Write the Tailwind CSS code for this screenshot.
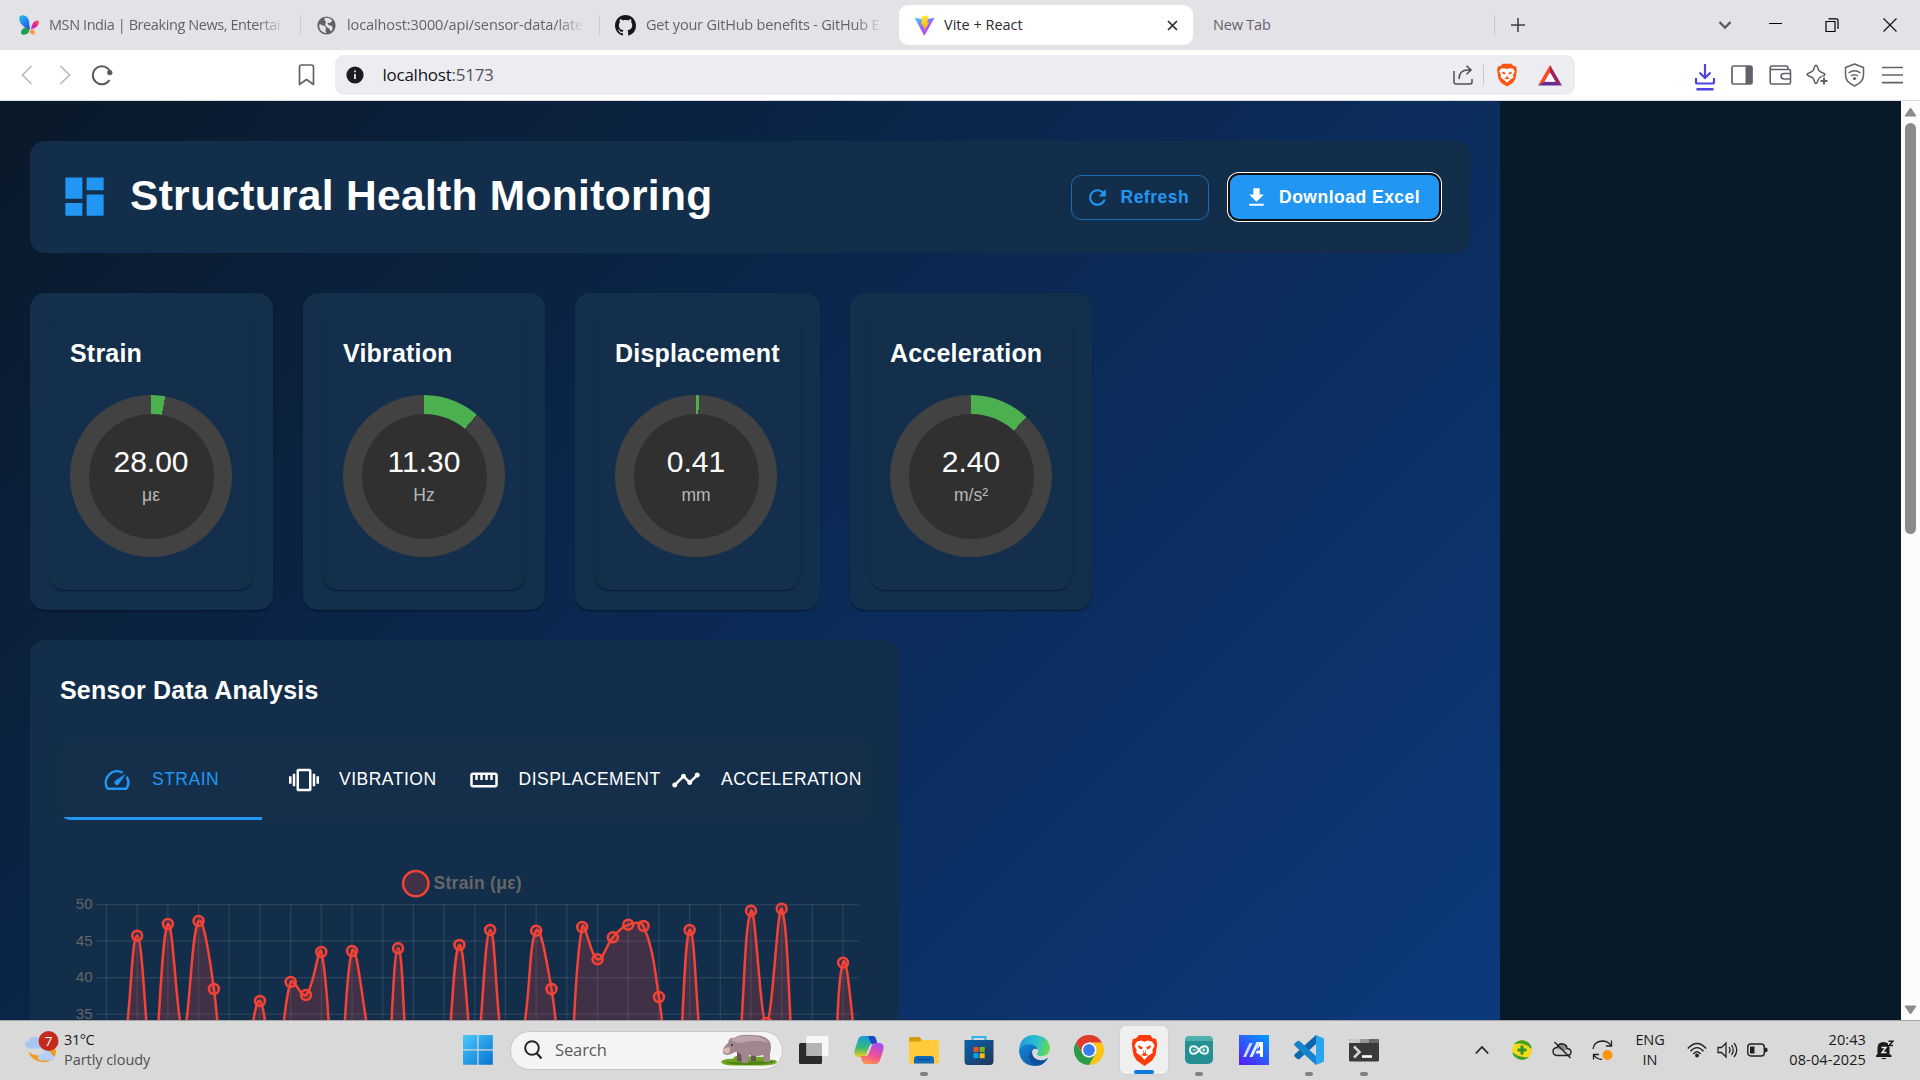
<!DOCTYPE html>
<html lang="en">
<head>
<meta charset="utf-8">
<title>Vite + React</title>
<script src="https://cdn.jsdelivr.net/npm/@tailwindcss/browser@4"></script>
</head>
<body class="w-[1920px] h-[1080px] overflow-hidden flex flex-col bg-[#081929] font-['Open_Sans',sans-serif]">

<!-- Tab strip -->
<div class="h-[50px] shrink-0 bg-[#e3e2e7] flex items-center text-[14.5px] text-[#63636a] whitespace-nowrap">
  <svg class="ml-[18px] w-[22px] h-[22px] shrink-0" viewBox="0 0 22 22"><defs><linearGradient id="m1" x1="0" y1="0" x2="0.6" y2="1"><stop offset="0" stop-color="#22c3ee"/><stop offset="1" stop-color="#2458e8"/></linearGradient><linearGradient id="m2" x1="0" y1="1" x2="1" y2="0"><stop offset="0" stop-color="#b22be0"/><stop offset=".5" stop-color="#e8208c"/><stop offset="1" stop-color="#ff6a3c"/></linearGradient></defs><path d="M2 2C5 0 10 2 11 7L12 16C9 15 4 12 2 8C1 5 1 3 2 2Z" fill="url(#m1)"/><path d="M21 7C18 5 14 8 13 15C17 15 21 12 21 7Z" fill="url(#m2)"/><path d="M11 15C7 12 3 15 3 19C4 22 9 21 11 18Z" fill="#1d9d55"/><path d="M12 16C15 14 17 17 17 19C16 22 13 21 12 18Z" fill="#ff9a4a"/></svg>
  <div class="ml-[9px] w-[236px] overflow-hidden tracking-[-0.42px] [mask-image:linear-gradient(to_right,black_88%,transparent)]">MSN India | Breaking News, Entertai</div>
  <div class="ml-[15px] w-px h-[20px] bg-[#cacacf]"></div>
  <svg class="ml-[16px] w-[19px] h-[19px] shrink-0" viewBox="0 0 20 20"><circle cx="10" cy="10" r="9.6" fill="#5f6368"/><path d="M3 8C5 11 8 9 9 12C10 14 8 15 10 18C4 18 1 12 3 8ZM8 2C12 1 15 3 16 5C14 6 15 8 12 7C10 7 12 10 14 10C16 10 17 12 16 15L14 16C14 12 10 13 9 10C8 7 11 6 8 5Z" fill="#e3e2e7"/></svg>
  <div class="ml-[11px] w-[238px] overflow-hidden tracking-[-0.1px] [mask-image:linear-gradient(to_right,black_88%,transparent)]">localhost:3000/api/sensor-data/lates</div>
  <div class="ml-[14px] w-px h-[20px] bg-[#cacacf]"></div>
  <svg class="ml-[15px] w-[21px] h-[21px] shrink-0" viewBox="0 0 16 16"><path fill="#17171a" d="M8 0C3.58 0 0 3.58 0 8c0 3.54 2.29 6.53 5.47 7.59.4.07.55-.17.55-.38 0-.19-.01-.82-.01-1.49-2.01.37-2.53-.49-2.69-.94-.09-.23-.48-.94-.82-1.13-.28-.15-.68-.52-.01-.53.63-.01 1.08.58 1.23.82.72 1.21 1.87.87 2.33.66.07-.52.28-.87.51-1.07-1.78-.2-3.64-.89-3.64-3.95 0-.87.31-1.59.82-2.15-.08-.2-.36-1.02.08-2.12 0 0 .67-.21 2.2.82.64-.18 1.32-.27 2-.27s1.36.09 2 .27c1.53-1.04 2.2-.82 2.2-.82.44 1.1.16 1.92.08 2.12.51.56.82 1.27.82 2.15 0 3.07-1.87 3.75-3.65 3.95.29.25.54.73.54 1.48 0 1.07-.01 1.93-.01 2.2 0 .21.15.46.55.38A8.01 8.01 0 0 0 16 8c0-4.42-3.58-8-8-8Z"/></svg>
  <div class="ml-[10px] w-[237px] overflow-hidden tracking-[-0.2px] [mask-image:linear-gradient(to_right,black_88%,transparent)]">Get your GitHub benefits - GitHub E</div>
  <div class="ml-[16px] w-[294px] h-[40px] rounded-[9px] bg-white flex items-center text-[#2b2b30]">
    <svg class="ml-[15px] w-[21px] h-[21px]" viewBox="0 0 21 21"><defs><linearGradient id="v1" x1="0" y1="0" x2=".6" y2="1"><stop offset="0" stop-color="#41d1ff"/><stop offset=".6" stop-color="#9a5cff"/><stop offset="1" stop-color="#bd34fe"/></linearGradient><linearGradient id="v2" x1="0" y1="0" x2="0" y2="1"><stop offset="0" stop-color="#ffea30"/><stop offset="1" stop-color="#ffa800"/></linearGradient></defs><path d="M.5 2.7L10.5 4.5L20.5 2.7L10.3 20.8Z" fill="url(#v1)"/><path d="M14.7.3L7.8 1.6L7.2 9.8L9.3 9.4L8.7 12.6L10.6 12L9.8 16.8L15.2 7.4L13 7.8Z" fill="url(#v2)"/></svg>
    <span class="ml-[9px]">Vite + React</span>
    <svg class="ml-auto mr-[15px] w-[11px] h-[11px]" viewBox="0 0 11 11"><path d="M1 1L10 10M10 1L1 10" stroke="#2b2b30" stroke-width="1.7"/></svg>
  </div>
  <span class="ml-[20px] w-[281px] tracking-[-0.2px]">New Tab</span>
  <div class="w-px h-[20px] bg-[#c4c4ca]"></div>
  <svg class="ml-[16px] w-[14px] h-[14px]" viewBox="0 0 14 14"><path d="M7 0V14M0 7H14" stroke="#3c3c42" stroke-width="1.5"/></svg>
  <svg class="ml-[193px] w-[14px] h-[10px]" viewBox="0 0 14 10"><path d="M1.5 2L7 7.7L12.5 2" stroke="#55555c" stroke-width="2.3" fill="none"/></svg>
  <div class="ml-[37px] mb-[3px] w-[13px] h-px bg-black"></div>
  <svg class="ml-[43px] w-[14px] h-[16px]" viewBox="0 0 14 16"><path d="M1 4.5H10V14.5H1ZM3.5 1.8H11.5Q13 1.8 13 3.5V12" stroke="#000" stroke-width="1.2" fill="none"/></svg>
  <svg class="ml-[44px] w-[14px] h-[14px]" viewBox="0 0 14 14"><path d="M.5 .5L13.5 13.5M13.5 .5L.5 13.5" stroke="#111" stroke-width="1.2"/></svg>
</div>

<!-- Toolbar -->
<div class="h-[51px] shrink-0 bg-white border-b border-[#dcdce2] flex items-center">
  <svg class="ml-[20px] w-[14px] h-[20px]" viewBox="0 0 14 20"><path d="M11.5 1L2.5 10L11.5 19" stroke="#b9b9be" stroke-width="1.7" fill="none"/></svg>
  <svg class="ml-[24px] w-[14px] h-[20px]" viewBox="0 0 14 20"><path d="M2.5 1L11.5 10L2.5 19" stroke="#b9b9be" stroke-width="1.7" fill="none"/></svg>
  <svg class="ml-[18px] w-[24px] h-[22px]" viewBox="0 0 24 22"><path d="M19.5 16A9 9 0 1 1 20.2 8" stroke="#55595f" stroke-width="1.9" fill="none"/><circle cx="19.8" cy="8.6" r="2.6" fill="#55595f"/></svg>
  <svg class="ml-[184px] w-[17px] h-[22px]" viewBox="0 0 17 22"><path d="M1.5 20.5V3Q1.5 1 3.5 1H13.5Q15.500 1 15.500 3V20.500L8.500 15.500Z" stroke="#5f6369" stroke-width="1.7" fill="none" stroke-linejoin="round"/></svg>
  <div class="ml-[20px] w-[1240px] h-[40px] rounded-[9px] bg-[#ededf1] flex items-center">
    <svg class="ml-[11px] w-[18px] h-[18px]" viewBox="0 0 18 18"><circle cx="9" cy="9" r="8.6" fill="#1b1b20"/><path d="M9 8V13M9 4.5V6.300" stroke="#e8e8ec" stroke-width="1.8"/></svg>
    <span class="ml-[18.5px] text-[17px] tracking-[-0.25px] text-[#15151a]">localhost<span class="text-[#52525a]">:5173</span></span>
    <svg class="ml-auto w-[20px] h-[20px]" viewBox="0 0 20 20"><path d="M1 6V17Q1 19 3 19H17Q19 19 19 17V14M6 14Q6 5 15 5H18M13.500 .8L18 5L13.500 9.300" stroke="#4c4f55" stroke-width="1.5" fill="none"/></svg>
    <div class="ml-[10px] w-px h-[20px] bg-[#c8c8ce]"></div>
    <svg class="ml-[12px] w-[22px] h-[24px]" viewBox="0 0 24 28"><path d="M7 1H17L19.500 3.500L22.500 4L23.500 8L22 18L19 23L12 27.500L5 23L2 18L.5 8L1.500 4L4.500 3.500Z" fill="#fb5412"/><path d="M5 6.500L9 6L12 7L15 6L19 6.500L21 9.500L19 14L19.500 17L15 20L12 23L9 20L4.500 17L5 14L3 9.500Z" fill="#fff"/><path d="M6 10L10.500 11.500L9.500 13.500L7 12.500ZM18 10L13.500 11.500L14.500 13.500L17 12.500ZM10.500 14L12 16.500L13.500 14L13 17L15.500 18L12 19L8.500 18L11 17Z" fill="#fb5412"/></svg>
    <svg class="ml-[20px] mr-[13px] w-[24px] h-[21px]" viewBox="0 0 24 21"><path d="M12 0L12 7.500L6.500 17L0 20.500Z" fill="#ff4724"/><path d="M12 0L24 20.500L17.500 17L12 7.500Z" fill="#9e1f63"/><path d="M0 20.500H24L17.500 16.500H6.500Z" fill="#662d91"/><path d="M12 7.500L17.500 16.700H6.500Z" fill="#fff"/></svg>
  </div>
  <svg class="ml-[119px] mt-[4px] w-[22px] h-[28px]" viewBox="0 0 22 28"><path d="M11 1V14M5.500 9.500L11 15L16.500 9.500M2 15V19Q2 20.500 3.500 20.500H18.500Q20 20.500 20 19V15" stroke="#4c44e4" stroke-width="2.200" fill="none"/><path d="M3.500 26.300H18.500" stroke="#4c44e4" stroke-width="2.400" stroke-linecap="round"/></svg>
  <svg class="ml-[15px] w-[22px] h-[20px]" viewBox="0 0 22 20"><rect x="1" y="1" width="20" height="18" rx="1.500" stroke="#5f6369" stroke-width="1.700" fill="none"/><path d="M14.500 1H21V19H14.500Z" fill="#5f6369"/></svg>
  <svg class="ml-[16px] w-[23px] h-[20px]" viewBox="0 0 23 20"><path d="M19 5V2.500Q19 1 17.500 1H3Q1.200 1 1.200 3Q1.200 4.500 3 4.500H20Q21.500 4.500 21.500 6V17.500Q21.500 19 20 19H2.700Q1.200 19 1.200 17.500V3M21.500 8.500H15.500Q12 8.500 12 11.300Q12 14 15.500 14H21.500" stroke="#5f6369" stroke-width="1.600" fill="none"/></svg>
  <svg class="ml-[14px] w-[23px] h-[22px]" viewBox="0 0 23 22"><path d="M10 1.200Q11 1.200 11.500 3C12.500 6.500 13 7.500 17 9Q19 9.700 19 10.500Q19 11.200 17 12C13 13.500 12.500 14.500 11.500 17.500Q11 19.500 10 19.500Q9 19.500 8.500 17.500C7.500 14 7 13.300 3 12Q1 11.200 1 10.500Q1 9.700 3 9C7 7.500 7.500 6.500 8.500 3Q9 1.200 10 1.200Z" stroke="#5f6369" stroke-width="1.500" fill="#fff"/><path d="M18 12.500V21.500M13.500 17H22.500" stroke="#fff" stroke-width="5"/><path d="M18 13.500V20.500M14.500 17H21.500" stroke="#5f6369" stroke-width="2"/></svg>
  <svg class="ml-[15px] w-[21px] h-[24px]" viewBox="0 0 21 24"><path d="M10.500 1L19.500 4.500V12Q19.500 19 10.500 23Q1.500 19 1.500 12V4.500Z" stroke="#5f6369" stroke-width="1.500" fill="none" stroke-linejoin="round"/><path d="M4.500 10Q10.500 5.500 16.500 10M7 13Q10.500 10.300 14 13" stroke="#5f6369" stroke-width="1.500" fill="none"/><circle cx="10.500" cy="15.500" r="1.600" fill="#5f6369"/></svg>
  <svg class="ml-[17px] w-[21px] h-[18px]" viewBox="0 0 21 18"><path d="M0 1.500H21M0 9H21M0 16.700H21" stroke="#5f6369" stroke-width="1.700"/></svg>
</div>

<!-- Page -->
<div class="h-[919px] shrink-0 flex overflow-hidden font-['Liberation_Sans',Arial,sans-serif]">
  <main class="w-[1500px] h-[1953px] px-[30px] pt-[40px] bg-[linear-gradient(135deg,#0a1929_0%,#0d47a1_100%)] text-white">

    <header class="h-[112px] rounded-[15px] bg-[#132e4b] pl-[29px] pr-[31px] flex items-center">
      <svg class="mb-px w-[51px] h-[51px]" viewBox="0 0 24 24"><path fill="#2196f3" d="M3 13h8V3H3v10zm0 8h8v-6H3v6zm10 0h8V11h-8v10zm0-18v6h8V3h-8z"/></svg>
      <h1 class="ml-[20px] mb-[2px] text-[42.5px] tracking-[0.00735em] font-bold">Structural Health Monitoring</h1>
      <button class="ml-auto w-[138px] h-[45px] rounded-[10px] border border-[#2196f3]/60 pl-[13px] flex items-center gap-[10.5px] text-[#2196f3] text-[17.5px] font-bold tracking-[0.02857em]">
        <svg class="w-[25px] h-[25px]" viewBox="0 0 24 24"><path fill="currentColor" d="M17.650 6.350C16.200 4.900 14.210 4 12 4c-4.420 0-7.990 3.580-7.990 8s3.570 8 7.990 8c3.730 0 6.840-2.550 7.730-6h-2.080c-.82 2.330-3.040 4-5.650 4-3.310 0-6-2.690-6-6s2.690-6 6-6c1.660 0 3.140.69 4.220 1.780L13 11h7V4l-2.350 2.350z"/></svg>Refresh
      </button>
      <button class="ml-[21px] w-[209px] h-[44px] rounded-[9px] bg-[#2196f3] shadow-[0_0_0_2px_#101010,0_0_0_3px_#ffffff] pl-[14px] flex items-center gap-[10px] text-[17.5px] font-bold tracking-[0.02857em] whitespace-nowrap">
        <svg class="w-[25px] h-[25px] shrink-0" viewBox="0 0 24 24"><path fill="currentColor" d="M19 9h-4V3H9v6H5l7 7 7-7zM5 18v2h14v-2H5z"/></svg>Download Excel
      </button>
    </header>

    <section class="mt-[40px] flex gap-[30px]" id="gauges"></section>

    <section class="mt-[30px] w-[869px] h-[700px] rounded-[15px] bg-[#132e4b] p-[30px]">
      <h2 class="h-[40px] leading-[40px] text-[25px] tracking-[0.0075em] font-bold">Sensor Data Analysis</h2>
      <div class="mt-[30px] w-[809px] h-[80px] rounded-[10px] bg-[#152f4a] overflow-hidden flex text-[17.5px] tracking-[0.02857em]">
        <div class="ml-[2px] w-[200px] border-b-[3px] border-[#2196f3] pl-[40px] pt-px flex items-center gap-[20px] text-[#2196f3]">
          <svg class="mt-[2px] w-[30px] h-[30px]" viewBox="0 0 24 24"><path fill="currentColor" d="m20.380 8.570-1.230 1.850a8 8 0 0 1-.22 7.580H5.070A8 8 0 0 1 15.580 6.850l1.850-1.230A10 10 0 0 0 3.350 19a2 2 0 0 0 1.720 1h13.850a2 2 0 0 0 1.740-1 10 10 0 0 0-.27-10.440zm-9.790 6.840a2 2 0 0 0 2.830 0l5.660-8.490-8.490 5.660a2 2 0 0 0 0 2.830z"/></svg>STRAIN
        </div>
        <div class="ml-[27px] w-[180px] flex items-center gap-[20px]">
          <svg class="w-[30px] h-[30px] shrink-0" viewBox="0 0 24 24"><path fill="currentColor" d="M0 15h2V9H0v6zm3 2h2V7H3v10zm19-8v6h2V9h-2zm-3 8h2V7h-2v10zM16.500 3h-9C6.670 3 6 3.670 6 4.500v15c0 .83.67 1.500 1.500 1.500h9c.83 0 1.500-.67 1.500-1.500v-15c0-.83-.67-1.500-1.500-1.500zM16 19H8V5h8v14z"/></svg><span class="mb-[2px]">VIBRATION</span>
        </div>
        <div class="w-[202px] flex items-center gap-[19.5px]">
          <svg class="w-[30px] h-[30px] shrink-0" viewBox="0 0 24 24"><path fill="currentColor" d="M21 6H3c-1.100 0-2 .9-2 2v8c0 1.100.9 2 2 2h18c1.100 0 2-.9 2-2V8c0-1.100-.9-2-2-2zm0 10H3V8h2v4h2V8h2v4h2V8h2v4h2V8h2v4h2V8h2v8z"/></svg><span class="mb-[2px]">DISPLACEMENT</span>
        </div>
        <div class="flex items-center gap-[20px]">
          <svg class="w-[30px] h-[30px] shrink-0" viewBox="0 0 24 24"><path fill="currentColor" d="M23 8c0 1.100-.9 2-2 2-.18 0-.35-.02-.51-.07l-3.560 3.550c.05.16.07.34.07.520 0 1.100-.9 2-2 2s-2-.9-2-2c0-.18.02-.36.07-.52l-2.550-2.550c-.16.05-.34.07-.52.07s-.36-.02-.52-.07l-4.550 4.560c.05.16.07.33.07.510 0 1.100-.9 2-2 2s-2-.9-2-2 .9-2 2-2c.18 0 .35.02.51.07l4.560-4.550C8.020 9.360 8 9.180 8 9c0-1.100.9-2 2-2s2 .9 2 2c0 .18-.02.36-.07.52l2.550 2.550c.16-.05.34-.07.52-.07s.36.02.52.07l3.550-3.560C19.020 8.350 19 8.180 19 8c0-1.100.9-2 2-2s2 .9 2 2z"/></svg><span class="mb-[2px]">ACCELERATION</span>
        </div>
      </div>
      <svg id="chart" class="w-[809px] h-[200px]" viewBox="60 820 809 200" font-family="Liberation Sans, Arial, sans-serif"></svg>
    </section>
  </main>
  <div class="ml-auto w-[19px] h-[919px] bg-[#fcfcfc] flex flex-col items-center">
    <svg class="mt-[6px] w-[13px] h-[10px]" viewBox="0 0 13 10"><path d="M6.500 1L12 9H1Z" fill="#8a8a8a" stroke="#8a8a8a" stroke-linejoin="round"/></svg>
    <div class="mt-[6px] w-[11px] h-[411px] rounded-full bg-[#8a8a8a]"></div>
    <svg class="mt-auto mb-[5px] w-[13px] h-[10px]" viewBox="0 0 13 10"><path d="M6.500 9L12 1H1Z" fill="#8a8a8a" stroke="#8a8a8a" stroke-linejoin="round"/></svg>
  </div>
</div>

<!-- Taskbar -->
<div class="h-[60px] shrink-0 bg-[#d9d9d9] border-t border-[#a8a8a8] pb-px flex items-center text-[#1a1a1a]">
  <div class="ml-[24px] w-[439px] flex items-center">
    <svg class="mb-[3px] w-[36px] h-[36px]" viewBox="0 0 36 36"><path d="M16 24.500Q27 25 27 13Q34 18 31 25Q27 32 18 31Q8 30 4 21Q10 25 16 24.500Z" fill="#f29a1f"/><path d="M5 17.500Q1 17 1 13.500Q1 10 5 10Q6 5 12 6Q18 7 18 17.500Z" fill="#a9c6f3"/><path d="M17 29.500Q13 29 14 25.500Q15 23 18 23Q20 18 25 20Q28 22 28 24Q31 25 30 28Q29 29.500 27 29.500Z" fill="#b5cef6"/><circle cx="24.500" cy="10" r="10" fill="#c42b1c"/><text x="24.500" y="15" text-anchor="middle" font-size="13.500" fill="#fff" font-family="Open Sans, sans-serif">7</text></svg>
    <div class="ml-[4px] mb-px text-[14.5px] leading-[20px] tracking-[-0.4px]"><div>31°C</div><div class="text-[#505050] tracking-[-0.05px]">Partly cloudy</div></div>
  </div>
  <svg class="w-[30px] h-[30px]" viewBox="0 0 30 30"><defs><linearGradient id="w1" x1="0" y1="0" x2="1" y2="1"><stop offset="0" stop-color="#4cc9fb"/><stop offset="1" stop-color="#0672d0"/></linearGradient></defs><path d="M0 0H14.300V14.300H0ZM15.500 0H29.800V14.300H15.500ZM0 15.500H14.300V29.800H0ZM15.500 15.500H29.800V29.800H15.500Z" fill="url(#w1)"/></svg>
  <div class="ml-[17px] w-[273px] h-[39px] rounded-full bg-[#f4f4f4] border border-[#c6c6c6] flex items-center">
    <svg class="ml-[12px] w-[20px] h-[20px]" viewBox="0 0 20 20"><circle cx="9" cy="8" r="6.800" stroke="#222" stroke-width="1.900" fill="none"/><path d="M13.500 13L18.500 18.500" stroke="#222" stroke-width="2.200"/></svg>
    <span class="ml-[12px] text-[16.5px] tracking-[-0.1px] text-[#5a5a5a]">Search</span>
    <svg class="ml-auto mr-[4px] w-[58px] h-[32px]" viewBox="0 0 58 32"><path d="M1 27Q8 24 12 25L16 22L45 23L49 26Q56 25 57 28Q56 31 44 31.500H12Q1 31 1 27Z" fill="#6fa51e"/><path d="M5 28L54 27Q50 31 30 31Q10 31 5 28Z" fill="#4f8510"/><path d="M31 17H36V27H31ZM17 16H22V27H17Z" fill="#6e555d"/><path d="M3 18Q2 14 8 9Q9 3 14 4Q20 0 32 1Q46 1 50 8Q52 14 50 19L50 28H44L43 21Q36 23 29 21L28 29H22L21 20Q17 18 15 18Q12 20 8 21Q3 21 3 18Z" fill="#a2868e"/><path d="M10 6Q20 1 32 2Q45 3 48 9Q38 5 26 8Q17 10 13 7Z" fill="#bda5a9"/><path d="M3 16Q5 21 9 19Q11 16 9 13L5 14Z" fill="#dcb9ae"/><circle cx="12" cy="11" r=".9" fill="#2b1b1b"/></svg>
  </div>
  <div class="ml-[3.500px] flex items-center">
    <div class="w-[55px] h-[59px] flex items-center justify-center"><svg class="w-[30px] h-[30px]" viewBox="0 0 30 30"><rect x="0" y="8" width="23" height="21" rx="1.500" fill="#2b2b2b"/><rect x="7.500" y="1" width="22" height="20" rx="1.500" fill="#fafafa" fill-opacity=".95"/><path d="M7.500 8H23V21H7.500Z" fill="#b4b4b4"/></svg></div>
    <div class="w-[55px] h-[59px] flex items-center justify-center"><svg class="w-[30px] h-[30px]" viewBox="0 0 30 30"><defs><linearGradient id="c1" x1="0" y1="0" x2="0" y2="1"><stop offset="0" stop-color="#159de0"/><stop offset=".55" stop-color="#35b77c"/><stop offset="1" stop-color="#f1cf18"/></linearGradient><linearGradient id="c2" x1=".7" y1="0" x2=".3" y2="1"><stop offset="0" stop-color="#a54df2"/><stop offset=".55" stop-color="#ee5098"/><stop offset="1" stop-color="#ff9248"/></linearGradient></defs><path d="M9 1H19Q21 1 22 4L23 9H18Q16 9 15 12L12 20Q11 22 8 22H4Q-1 21 1 14L4 5Q5 1 9 1Z" fill="url(#c1)"/><path d="M14 1H18.500Q21 1 22 4L23.500 9H18L16 6Z" fill="#1a45c4"/><path d="M21 29H11Q9 29 8 26L6.500 21H12Q14 21 15 18L18 10Q19 8 22 8H26Q31 9 29 16L26 25Q25 29 21 29Z" fill="url(#c2)"/></svg></div>
    <div class="relative w-[55px] h-[59px] flex items-center justify-center"><svg class="w-[30px] h-[28px]" viewBox="0 0 30 28"><path d="M0 3Q0 1 2 1H10L13 4H13V8H0Z" fill="#d99a07"/><path d="M0 5.500H11L13 4H28.500Q30 4 30 5.500V26Q30 27.500 28.500 27.500H1.500Q0 27.500 0 26Z" fill="#ffcb3d"/><path d="M5 27.500V23Q5 20 8 20H22Q25 20 25 23V27.500Z" fill="#0f6cbd"/><path d="M9 23.500H21" stroke="#0a4d91" stroke-width="1.500"/></svg><i class="absolute bottom-[4px] w-[8px] h-[4px] rounded-full bg-[#818181]"></i></div>
    <div class="w-[55px] h-[59px] flex items-center justify-center"><svg class="w-[30px] h-[30px]" viewBox="0 0 30 30"><defs><linearGradient id="s1" x1="0" y1="0" x2="1" y2="1"><stop offset="0" stop-color="#0a63ad"/><stop offset="1" stop-color="#213459"/></linearGradient></defs><path d="M8.500 6V2H21.500V6" stroke="#2fb4f0" stroke-width="2" fill="none"/><path d="M.5 5H29.500V26Q29.500 30 26 30H4Q.5 30 .5 26Z" fill="url(#s1)"/><path d="M9.500 12H14.500V17H9.500Z" fill="#f25022"/><path d="M15.700 12H20.700V17H15.700Z" fill="#7fba00"/><path d="M9.500 18.200H14.500V23.200H9.500Z" fill="#00a4ef"/><path d="M15.700 18.200H20.700V23.200H15.700Z" fill="#ffb900"/></svg></div>
    <div class="w-[55px] h-[59px] flex items-center justify-center"><svg class="w-[31px] h-[31px]" viewBox="0 0 30 30"><defs><linearGradient id="e1" x1="0" y1=".3" x2="1" y2=".5"><stop offset="0" stop-color="#1c9de0"/><stop offset=".55" stop-color="#2cbfd0"/><stop offset="1" stop-color="#66dc50"/></linearGradient><linearGradient id="e2" x1="0" y1="0" x2="1" y2="1"><stop offset="0" stop-color="#1488d8"/><stop offset="1" stop-color="#0c4a94"/></linearGradient></defs><path d="M0 15Q1 0 15 0Q29 1 30 13Q29 20 22 20.500Q17 20.500 17.500 18Q20 15 17 12Q10 6 0 15Z" fill="url(#e1)"/><path d="M0 15Q3 8 11 9Q17 10 18 14Q14 12 12.500 16Q12 24 21 25Q25 25 28 22Q24 30 15 30Q1 29 0 15Z" fill="url(#e2)"/><path d="M12.500 16Q8 20 11 25Q14 29 19 29.500Q25 28 28 22Q25 25 20 24.500Q12.500 23 12.500 16Z" fill="#0d4f9f"/></svg></div>
    <div class="w-[55px] h-[59px] flex items-center justify-center"><svg class="w-[30px] h-[30px]" viewBox="0 0 30 30"><path d="M28 7.500A15 15 0 0 1 15 30L21.500 18.700L15 7.500Z" fill="#fcc419"/><path d="M2 7.500L8.500 18.700L15 7.500H28A15 15 0 0 0 2 7.500Z" fill="#df3a2c"/><path d="M2 7.500A15 15 0 0 0 15 30L21.500 18.700L15 22L8.500 18.700Z" fill="#2a9b48"/><circle cx="15" cy="15" r="7.500" fill="#fff"/><circle cx="15" cy="15" r="5.900" fill="#3b7ded"/></svg></div>
    <div class="w-[55px] h-[59px] flex items-center justify-center"><div class="relative w-[48px] h-[48px] rounded-[5px] bg-[#efefef] shadow-[0_0_1px_#999] flex items-center justify-center"><svg class="w-[27px] h-[31px]" viewBox="0 0 24 28"><path d="M7 0H17L19.500 3L22.500 3.500L23.500 8L22 18L19 23L12 28L5 23L2 18L.5 8L1.500 3.500L4.500 3Z" fill="#fb3b0c"/><path d="M5 6L9 5L12 6L15 5L19 6L21 9.500L19 14L19.500 16L15 19L12 22.500L9 19L4.500 16L5 14L3 9.500Z" fill="#fff"/><path d="M6 9L10.500 11L9.500 13L7 12ZM18 9L13.500 11L14.500 13L17 12ZM10.500 13L12 16.500L13.500 13L13 17L15.500 18L12 19L8.500 18L11 17Z" fill="#fb3b0c"/></svg><i class="absolute bottom-0 w-[20px] h-[4px] rounded-full bg-[#0d7ad8]"></i></div></div>
    <div class="relative w-[55px] h-[59px] flex items-center justify-center"><svg class="w-[28px] h-[28px]" viewBox="0 0 28 28"><rect width="28" height="28" rx="5" fill="#239094"/><path d="M0 5Q0 0 5 0H23Q28 0 28 5Z" fill="#4eb0aa"/><path d="M14 14C11 9 5 9 5 14S11 19 14 14S23 9 23 14S17 19 14 14Z" stroke="#e7f5f4" stroke-width="2" fill="none"/><path d="M7.500 14H11M17 14H20.500M18.750 12.300V15.700" stroke="#e7f5f4"/></svg><i class="absolute bottom-[4px] w-[8px] h-[4px] rounded-full bg-[#818181]"></i></div>
    <div class="w-[55px] h-[59px] flex items-center justify-center"><svg class="w-[30px] h-[30px]" viewBox="0 0 30 30"><defs><linearGradient id="a1" x1=".9" y1="0" x2=".1" y2="1"><stop offset="0" stop-color="#0498ff"/><stop offset="1" stop-color="#571ef8"/></linearGradient></defs><path d="M0 0H30V30H0Z" fill="url(#a1)"/><path d="M4 22L10.500 8H13.500L7 22Z" fill="#cfdcff"/><path d="M10.500 22L17.500 7H20.500L13.500 22Z" fill="#eaf1ff"/><path d="M20.500 7H24V22H21V18.500H16.500L18 15.500H21V11L17.500 15Z" fill="#fff"/></svg></div>
    <div class="relative w-[55px] h-[59px] flex items-center justify-center"><svg class="w-[30px] h-[30px]" viewBox="0 0 30 30"><path d="M22 0L30 3.500V26.500L22 30Z" fill="#2aa5ef"/><path d="M22 0L1 19Q-.5 20.500 1 22L3.500 24Q4.500 24.500 5.500 24L22 9Z" fill="#0b67ad"/><path d="M22 30L1 11Q-.5 9.500 1 8L3.500 6Q4.500 5.500 5.500 6L22 21Z" fill="#1583cd"/></svg><i class="absolute bottom-[4px] w-[8px] h-[4px] rounded-full bg-[#818181]"></i></div>
    <div class="relative w-[55px] h-[59px] flex items-center justify-center"><svg class="w-[30px] h-[24px]" viewBox="0 0 30 24"><rect y="1" width="30" height="22.500" rx="1.500" fill="#3a3a3a"/><path d="M0 5V2.500Q0 1 1.500 1H11V5Z" fill="#c9c9c9"/><path d="M11 1H20V5H11Z" fill="#979797"/><path d="M20 1H28.500Q30 1 30 2.500V5H20Z" fill="#666"/><path d="M5 8.500L10.500 14L5 19.500" stroke="#d2d2d2" stroke-width="2.600" fill="none"/><path d="M13 18.500H23" stroke="#fff" stroke-width="2.600"/></svg><i class="absolute bottom-[4px] w-[8px] h-[4px] rounded-full bg-[#818181]"></i></div>
  </div>
  <div class="ml-auto mr-[26px] flex items-center">
    <svg class="w-[14px] h-[10px]" viewBox="0 0 14 10"><path d="M.8 8.500L7 2L13.200 8.500" stroke="#222" stroke-width="1.800" fill="none"/></svg>
    <svg class="ml-[23px] w-[20px] h-[20px]" viewBox="0 0 20 20"><circle cx="10" cy="10" r="10" fill="#f6d81c"/><path d="M2 4Q9 -3 17 3Q20 6 19.500 9Q13 2 2 4ZM.5 12Q6 18 17 17Q10 23 3 17Q.5 15 .5 12Z" fill="#3f9f2a"/><path d="M10 5.500V14.500M5.500 10H14.500" stroke="#2f9427" stroke-width="3"/></svg>
    <svg class="ml-[20px] w-[20px] h-[18px]" viewBox="0 0 20 18"><path d="M5 14.500Q1 14 1 10.500Q1 7 5 6.500Q7 2 11 3Q15 4 15 7.500Q19 8 19 11Q19 14.500 15 14.500Z" fill="#cfcfcf"/><path d="M4 7Q7 2 11 3Q15 4 15 8L12 10Z" fill="#8c8c8c"/><path d="M5 14.500Q1 14 1 10.500Q1 7 5 6.500Q7 2 11 3Q15 4 15 7.500Q19 8 19 11Q19 14.500 15 14.500Z" fill="none" stroke="#222" stroke-width="1.400"/><path d="M2.500 1L18.500 17" stroke="#222" stroke-width="1.500"/></svg>
    <svg class="ml-[20px] w-[21px] h-[20px]" viewBox="0 0 21 20"><path d="M1 9Q2 1.500 10 1Q16 1 19 5.500M19.500 .5V6H14M1.500 19.500V14.500H7M1.500 14.500Q4 19 10 19.500" stroke="#222" stroke-width="1.300" fill="none"/><circle cx="15.500" cy="15" r="5" fill="#fb960b"/></svg>
    <div class="ml-[19px] w-[36px] text-center text-[14.5px] leading-[20px] tracking-[-0.1px]"><div>ENG</div><div>IN</div></div>
    <svg class="ml-[19px] w-[20px] h-[16px]" viewBox="0 0 20 16"><path d="M.8 6.500Q10 -3.500 19.200 6.500M3.500 9.300Q10 2 16.500 9.300M6.300 12Q10 7.500 13.700 12" stroke="#222" stroke-width="1.400" fill="none"/><circle cx="10" cy="13.500" r="1.900" fill="#222"/></svg>
    <svg class="ml-[10px] w-[21px] h-[18px]" viewBox="0 0 21 18"><path d="M1 6.500H4.500L9 2V16L4.500 11.500H1ZM12 6Q14 9 12 12M14.500 4Q18 9 14.500 14M17 2Q22.500 9 17 16" stroke="#222" stroke-width="1.300" fill="none"/></svg>
    <svg class="ml-[9px] w-[21px] h-[14px]" viewBox="0 0 21 14"><rect x=".8" y="1" width="16.500" height="12" rx="3" stroke="#222" stroke-width="1.400" fill="none"/><rect x="3" y="3.500" width="4.500" height="7" fill="#222"/><path d="M18 4.500L20.500 5.500V8.500L18 9.500Z" fill="#222"/></svg>
    <div class="ml-[10px] w-[88px] text-right text-[14.5px] leading-[20px] tracking-[0.1px]"><div>20:43</div><div>08-04-2025</div></div>
    <svg class="ml-[10px] w-[18px] h-[20px]" viewBox="0 0 18 20"><path d="M1.500 14V8Q1.500 2 7.500 2Q13.500 2 13.500 8V14L15.500 15.500V17H0V15.500ZM5 18H10.500Q8 20.500 5 18Z" fill="#1b1b1b"/><path d="M11.500 0H18V6H12V3Z" fill="#d9d9d9"/><path d="M12.500 1.200H17L12.800 5.500H17" stroke="#1b1b1b" stroke-width="1.400" fill="none"/><path d="M5.500 7.500H10L6 12.500H10.500" stroke="#eee" stroke-width="1.400" fill="none"/></svg>
  </div>
</div>

<script>
const gauges = [
  { name: 'Strain', value: '28.00', unit: 'με', pct: 2.8, w: 243 },
  { name: 'Vibration', value: '11.30', unit: 'Hz', pct: 11.3, w: 242 },
  { name: 'Displacement', value: '0.41', unit: 'mm', pct: 0.6, w: 245 },
  { name: 'Acceleration', value: '2.40', unit: 'm/s²', pct: 12, w: 242 },
];
document.getElementById('gauges').innerHTML = gauges.map(g => `
  <div class="h-[317px] shrink-0 rounded-[15px] bg-[#142f4b] px-[20px] pt-[20px] shadow-[0_2px_1px_-1px_rgba(0,0,0,0.2),0_1px_1px_rgba(0,0,0,0.14),0_1px_3px_rgba(0,0,0,0.12)]" style="width:${g.w}px">
    <div class="h-[277px] rounded-[15px] bg-[#142f4b] p-[20px] shadow-[0_2px_1px_-1px_rgba(0,0,0,0.2),0_1px_1px_rgba(0,0,0,0.14),0_1px_3px_rgba(0,0,0,0.12)]">
      <h3 class="h-[40px] leading-[40px] text-[25px] tracking-[0.0075em] font-bold">${g.name}</h3>
      <div class="mt-[22px] w-[162px] h-[162px] rounded-full flex items-center justify-center" style="background:conic-gradient(#4caf50 ${g.pct}%, #424242 ${g.pct}%)">
        <div class="w-[125px] h-[125px] rounded-full bg-[#303030] flex flex-col items-center pt-[28px]">
          <div class="h-[41px] leading-[40px] text-[30px]">${g.value}</div>
          <div class="h-[25px] leading-[25px] text-[17.5px] text-[#b8b8b8]">${g.unit}</div>
        </div>
      </div>
    </div>
  </div>`).join('');

// Strain series, drawn as a smoothed line (tension 0.4)
const x0 = 106.5, dx = 15.345;
const ys = [1100,1067,935.7,1067,924,1031,921,989,1150,1075,1001,1090,982,995,952,1120,951,1028,1130,948.3,1130,1150,1088,945,1065,930,1062,1045,930.7,989,1110,959.3,937.3];
ys.splice(31, 2, 927, 959.3, 937.3, 924.7, 926, 997, 1120, 930, 1090, 1150, 1090, 910.7, 1023, 908.7, 1110, 1180, 1160, 962.7, 1070);
const pts = ys.map((y, i) => [x0 + dx * i, y]);
const cps = pts.map((p, i) => {
  const a = pts[Math.max(i - 1, 0)], b = pts[Math.min(i + 1, pts.length - 1)];
  const d1 = Math.hypot(p[0] - a[0], p[1] - a[1]), d2 = Math.hypot(b[0] - p[0], b[1] - p[1]);
  const f1 = 0.4 * d1 / (d1 + d2 || 1), f2 = 0.4 * d2 / (d1 + d2 || 1);
  const top = v => Math.max(v, 904.5);
  return [[p[0] - f1 * (b[0] - a[0]), top(p[1] - f1 * (b[1] - a[1]))], [p[0] + f2 * (b[0] - a[0]), top(p[1] + f2 * (b[1] - a[1]))]];
});
let line = `M${pts[0]}`;
for (let i = 1; i < pts.length; i++) line += `C${cps[i - 1][1]} ${cps[i][0]} ${pts[i]}`;
let s = '';
for (let i = 0; i < 25; i++) s += `<path d="M${x0 + i * 30.69} 904.5V1040" stroke="#fff" stroke-opacity=".1" stroke-width="1.25"/>`;
[50, 45, 40, 35].forEach((v, i) => {
  const y = 904.5 + i * 36.55;
  s += `<path d="M96.500 ${y}H858.500" stroke="#fff" stroke-opacity=".1" stroke-width="1.25"/><text x="92.500" y="${y + 4.500}" text-anchor="end" font-size="15" fill="#666">${v}</text>`;
});
s += `<path d="${line}V1300H${x0}Z" fill="#f44336" fill-opacity=".2"/><path d="${line}" fill="none" stroke="#f44336" stroke-width="2.5"/>`;
pts.forEach(p => { s += `<circle cx="${p[0]}" cy="${p[1]}" r="5" fill="#f44336" fill-opacity=".2" stroke="#f44336" stroke-width="2.500"/>`; });
s += `<circle cx="415.800" cy="883.600" r="12.700" fill="#f44336" fill-opacity=".2" stroke="#f44336" stroke-width="2.500"/><text x="433.500" y="888.500" font-size="17.500" letter-spacing=".3" font-weight="bold" fill="#666">Strain (με)</text>`;
document.getElementById('chart').innerHTML = s;
</script>
</body>
</html>
